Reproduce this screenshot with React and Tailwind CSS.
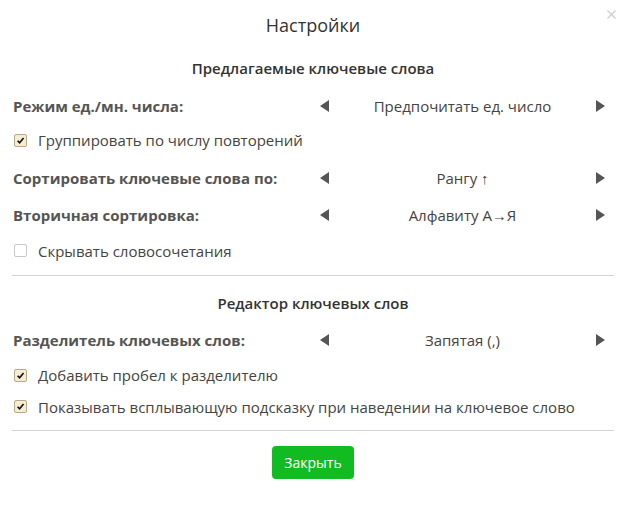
import React from "react";

function Check({ checked }) {
  return (
    <span
      className={`grid h-[13px] w-[13px] shrink-0 place-items-center rounded-[2px] border ${
        checked ? "border-[#b9a98a] bg-[#f6ecd2]" : "border-[#c8c8c8] bg-white"
      }`}
    >
      {checked ? (
        <svg viewBox="0 0 10 10" className="h-[9px] w-[9px]">
          <path d="M1.8 5.2 L4 7.6 L8.4 2.2" fill="none" stroke="#111" strokeWidth="1.8" />
        </svg>
      ) : null}
    </span>
  );
}

function CheckRow({ checked, label, className = "" }) {
  return (
    <div className={`flex items-center gap-[11px] pl-[14px] ${className}`}>
      <Check checked={checked} />
      <span>{label}</span>
    </div>
  );
}

function Arrow({ dir }) {
  return (
    <svg viewBox="0 0 9 12" className="h-[12px] w-[9px] shrink-0">
      {dir === "left" ? <path d="M9 0 L0 6 L9 12 Z" fill="#555" /> : <path d="M0 0 L9 6 L0 12 Z" fill="#555" />}
    </svg>
  );
}

function Picker({ label, value, className = "" }) {
  return (
    <div className={`flex items-center ${className}`}>
      <div className="w-[320px] pl-[13px] font-bold text-[#555]">{label}</div>
      <div className="flex flex-1 items-center pr-[21px]">
        <Arrow dir="left" />
        <span className="flex-1 text-center">{value}</span>
        <Arrow dir="right" />
      </div>
    </div>
  );
}

export default function App() {
  return (
    <div className="relative h-[508px] w-[626px] bg-white text-[15px] text-[#444]" style={{ fontFamily: "'Open Sans', sans-serif" }}>
      <button className="absolute right-[10px] top-[10px]">
        <svg viewBox="0 0 10 10" className="h-[9px] w-[9px]">
          <path d="M0.5 0.5 L9.5 9.5 M9.5 0.5 L0.5 9.5" stroke="#cfcfcf" strokeWidth="1.4" />
        </svg>
      </button>
      <div className="pt-[12px] text-center text-[18px] text-[#333]">Настройки</div>
      <div className="mt-[18px] text-center font-semibold text-[#333]">Предлагаемые ключевые слова</div>
      <Picker className="mt-[15px]" label="Режим ед./мн. числа:" value="Предпочитать ед. число" />
      <CheckRow className="mt-[12px]" checked label="Группировать по числу повторений" />
      <Picker className="mt-[15px]" label="Сортировать ключевые слова по:" value="Рангу ↑" />
      <Picker className="mt-[15px]" label="Вторичная сортировка:" value="Алфавиту А→Я" />
      <CheckRow className="mt-[13px]" checked={false} label="Скрывать словосочетания" />
      <div className="mx-[12px] mt-[13px] h-px bg-[#d4d4d4]" />
      <div className="mt-[16px] text-center font-semibold text-[#333]">Редактор ключевых слов</div>
      <Picker className="mt-[14px]" label="Разделитель ключевых слов:" value="Запятая (,)" />
      <CheckRow className="mt-[13px]" checked label="Добавить пробел к разделителю" />
      <CheckRow className="mt-[9px]" checked label="Показывать всплывающую подсказку при наведении на ключевое слово" />
      <div className="mx-[12px] mt-[12px] h-px bg-[#d4d4d4]" />
      <div className="mt-[15px] flex justify-center">
        <button className="h-[33px] w-[82px] rounded-[4px] bg-[#12bb22] text-[14px] text-white">Закрыть</button>
      </div>
    </div>
  );
}
